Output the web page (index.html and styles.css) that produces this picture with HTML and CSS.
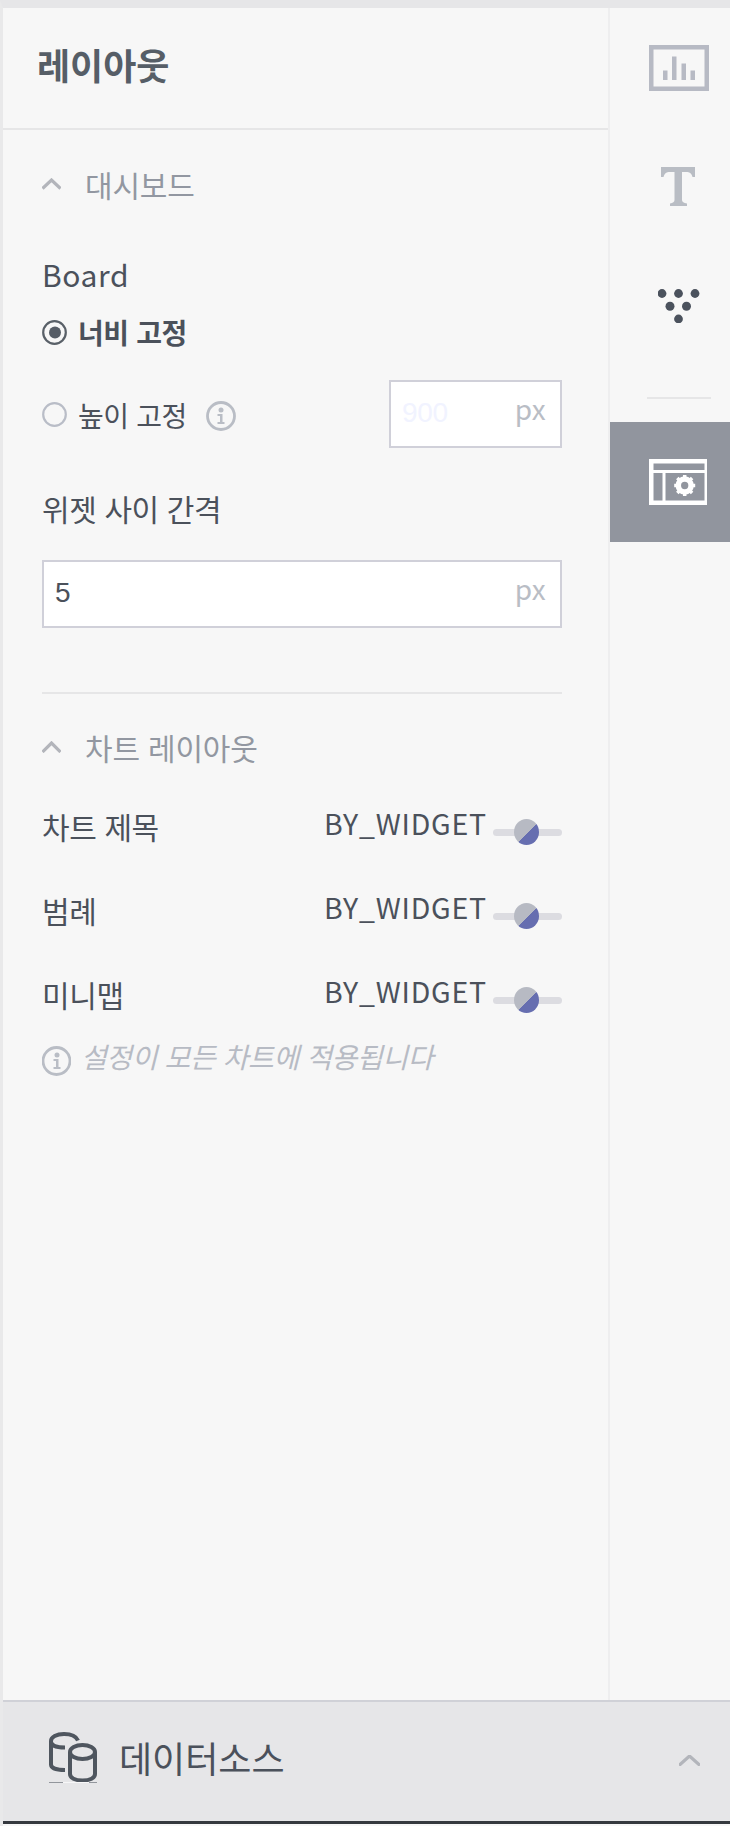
FILE: index.html
```html
<!DOCTYPE html>
<html lang="ko">
<head>
<meta charset="utf-8">
<title>레이아웃</title>
<link rel="stylesheet" href="styles.css">
</head>
<body>
<div class="app">
  <div class="workspace">
    <main class="panel">
      <h1 class="panel-title">레이아웃</h1>
      <section class="section dashboard">
        <h2 class="section-head">
          <svg class="caret" width="19" height="12" viewBox="0 0 19 12"><path d="M0.5 10.5L9.5 2L18.500 10.500"/></svg>
          <span>대시보드</span>
        </h2>
        <div class="board-label">Board</div>
        <div class="option selected">
          <svg class="radio" width="25" height="25" viewBox="0 0 25 25"><circle class="ring" cx="12.500" cy="12.500" r="11.300"/><circle class="dot" cx="13" cy="12.500" r="6"/></svg>
          <span>너비 고정</span>
        </div>
        <div class="option height-option">
          <svg class="radio" width="25" height="25" viewBox="0 0 25 25"><circle class="ring" cx="12.500" cy="12.500" r="11.300"/></svg>
          <span class="option-text">높이 고정</span>
          <svg class="info" width="30" height="30" viewBox="0 0 30 30"><circle class="info-ring" cx="15" cy="15" r="13.500"/><circle cx="15" cy="9" r="2.500"/><path d="M11.500 13h5v8h2v2h-7v-2h2.500v-6h-2.500z"/></svg>
          <div class="field small"><span class="value disabled">900</span><span class="unit">px</span></div>
        </div>
        <div class="gap-label">위젯 사이 간격</div>
        <div class="field"><span class="value">5</span><span class="unit">px</span></div>
      </section>
      <section class="section charts">
        <h2 class="section-head">
          <svg class="caret" width="19" height="12" viewBox="0 0 19 12"><path d="M0.5 11L9.500 2L18.500 11"/></svg>
          <span>차트 레이아웃</span>
        </h2>
        <div class="settings">
          <div class="setting"><span class="name">차트 제목</span><span class="mode">BY_WIDGET</span><span class="slider"><i class="knob"></i></span></div>
          <div class="setting"><span class="name">범례</span><span class="mode">BY_WIDGET</span><span class="slider"><i class="knob"></i></span></div>
          <div class="setting"><span class="name">미니맵</span><span class="mode">BY_WIDGET</span><span class="slider"><i class="knob"></i></span></div>
        </div>
        <p class="note">
          <svg class="info" width="29" height="30" viewBox="0 0 29 30"><circle class="info-ring" cx="14.500" cy="15" r="13.500"/><circle cx="15" cy="9" r="2.500"/><path d="M11.500 13h5v8h2v2h-7v-2h2.500v-6h-2.500z"/></svg>
          <span>설정이 모든 차트에 적용됩니다</span>
        </p>
      </section>
    </main>
    <nav class="rail">
      <a class="tool chart-tool">
        <svg width="60" height="46" viewBox="0 0 60 46"><path fill-rule="evenodd" d="M0 0h60v46H0zM4.500 4.500v37h51v-37z"/><rect x="14" y="25.500" width="4.500" height="9.500"/><rect x="23" y="11.500" width="4.500" height="23.500"/><rect x="32.500" y="18.500" width="4.500" height="16.500"/><rect x="41.500" y="25.500" width="4.500" height="9.500"/></svg>
      </a>
      <a class="tool text-tool">
        <svg width="34" height="39" viewBox="0 0 34 39"><path d="M0 0H34V10H31.500Q30.500 5.500 26.500 5H21V33Q21 35.500 26 36.500V39H9V36.500Q13.500 35.500 13.500 33V5H7.500Q3.500 5.500 2.500 10H0z"/></svg>
      </a>
      <a class="tool filter-tool">
        <svg width="42" height="34" viewBox="0 0 42 34"><circle cx="4" cy="4.500" r="4.400"/><circle cx="20.500" cy="4.500" r="4.400"/><circle cx="37" cy="4.500" r="4.400"/><circle cx="12" cy="17.300" r="4.500"/><circle cx="28.500" cy="17.300" r="4.500"/><circle cx="20.500" cy="30" r="4.400"/></svg>
      </a>
      <div class="rail-divider"></div>
      <a class="tool layout-tool">
        <svg width="58" height="46" viewBox="0 0 58 46"><path fill-rule="evenodd" d="M0 0h58v46H0zM4.500 4.500v6.500h51v-6.500zM4.500 14v27.500h9V14zM16.500 14v27.500h39V14z"/><circle class="gear" cx="35.700" cy="26.500" r="6.400"/><path class="teeth" d="M35.700 16v4M35.700 33v4M25.200 26.500h4M42.200 26.500h4M28.300 19.100l2.500 2.500M40.600 31.400l2.500 2.500M43.100 19.100l-2.500 2.500M30.800 31.400l-2.500 2.500"/></svg>
      </a>
    </nav>
  </div>
  <footer class="datasource">
    <svg class="db" width="48" height="51" viewBox="0 0 48 51">
      <path d="M29 8.500C27 4 21.500 2 15 2C7.500 2 2 5 2 9V32.500C2 36 8 38 16 38M2 9.500C2 13.500 8 15.500 16 15.500"/>
      <ellipse cx="33.500" cy="20" rx="12.500" ry="7"/>
      <path d="M21 20V42C21 46 26 48.500 33.500 48.500S46 46 46 42V20"/>
      <path class="edge" d="M0 50.500H48"/><path class="edge light" d="M14 50.500H40"/>
    </svg>
    <span class="source-name">데이터소스</span>
    <svg class="caret" width="21" height="11" viewBox="0 0 21 11"><path d="M0 10.500L10.500 1L21 10.500"/></svg>
  </footer>
</div>
</body>
</html>
```
FILE: styles.css
```css
* { box-sizing: border-box; }

body {
  margin: 0;
  background: #f7f7f7;
  color: #4b515b;
  font: 30px/40px "Noto Sans CJK KR", "Noto Sans", sans-serif;
}

h1, h2, p { margin: 0; font-weight: 400; }
svg { display: block; flex: none; }

.app {
  display: flex;
  flex-direction: column;
  height: 1826px;
  padding-bottom: 2px;
  border-top: 8px solid #e6e6e8;
  border-left: 3px solid #e9e9ea;
  overflow: hidden;
}

.workspace { display: flex; flex: 1; min-height: 0; }
.panel { width: 605px; }

.panel-title {
  height: 122px;
  padding: 36px 0 0 34px;
  border-bottom: 2px solid #e6e6e7;
  color: #565e67;
  font-size: 36px;
  font-weight: 700;
}

.section { margin: 0 46px 0 39px; letter-spacing: -0.4px; }
.dashboard { padding: 34px 0 64px; border-bottom: 2px solid #e6e6e7; }
.charts { padding-top: 33px; }

.section-head {
  display: flex;
  align-items: center;
  gap: 24px;
  height: 40px;
  color: #9297a1;
  font-size: 30px;
  letter-spacing: -0.2px;
}

.caret { fill: none; stroke: #b3b5bb; stroke-width: 3.2; }
.board-label { height: 40px; margin-top: 50px; letter-spacing: 0.6px; }

.option { display: flex; align-items: center; height: 40px; font-size: 28px; }
.option.selected { margin-top: 18px; font-weight: 700; }
.height-option { height: 68px; margin-top: 28px; }
.option-text { padding-top: 2px; }
.radio { margin-right: 11px; }
.ring { fill: none; stroke: #b9bdc7; stroke-width: 2.2; }
.selected .ring { stroke: #596068; }
.dot { fill: #565d66; }
.info { fill: #b9bdc5; }
.height-option .info { margin: 3px 0 0 19px; }
.info-ring { fill: none; stroke: #b9bdc5; stroke-width: 2.8; }

.gap-label { height: 40px; margin: 40px 0 32px; }

.field {
  display: flex;
  justify-content: space-between;
  height: 68px;
  padding: 6px 14px 0 11px;
  border: 2px solid #d0d0d9;
  background: #fff;
  font-size: 28px;
  letter-spacing: 0;
}
.field.small { width: 173px; margin-left: auto; }
.value { padding-top: 5px; font-family: "Liberation Sans", Arial, sans-serif; letter-spacing: -0.3px; }
.disabled { color: #f1f3ff; }
.unit { color: #b9bdc5; letter-spacing: 0.3px; }

.settings { display: grid; gap: 44px; margin-top: 39px; }
.setting { display: flex; align-items: center; height: 40px; }
.mode { margin: -6px 6px 0 auto; font-size: 28.500px; letter-spacing: 0.8px; }
.slider {
  display: flex;
  align-items: center;
  width: 69px;
  height: 7px;
  margin-top: 12px;
  padding-left: 21px;
  border-radius: 4px;
  background: #dcdce1;
}
.knob {
  width: 25px;
  height: 26px;
  border-radius: 50%;
  background: linear-gradient(135deg, #b7bac3 0 53%, #666eb0 54%);
}

.note {
  display: flex;
  gap: 10px;
  height: 40px;
  margin-top: 22px;
  color: #b7bbc4;
  font-size: 28px;
  font-style: italic;
}
.note .info { margin-top: 10px; }

.rail {
  display: flex;
  flex-direction: column;
  width: 122px;
  border-left: 2px solid #eeeeef;
  fill: #b7bac4;
}
.tool { display: flex; align-items: center; height: 120px; padding-left: 39px; }
.text-tool { padding: 0 0 4px 51px; fill: #b9bdc4; }
.filter-tool { padding: 0 0 4px 48px; fill: #4b525d; }
.rail-divider { width: 64px; height: 2px; margin: 29px 0 23px 37px; background: #e6e6e7; }
.layout-tool { background: #91959e; fill: #fff; }
.gear { fill: none; stroke: #fff; stroke-width: 5.5; }
.teeth { fill: none; stroke: #fff; stroke-width: 3.5; }

.datasource {
  display: flex;
  align-items: center;
  height: 124px;
  padding: 0 30px 2px 46px;
  border-top: 2px solid #d0d1d7;
  border-bottom: 3px solid #35393f;
  background: #e6e6e8;
  font-size: 36px;
}
.db { margin: -7px 22px 0 0; fill: none; stroke: #4f565f; stroke-width: 4; }
.db .edge { stroke: #92969c; stroke-width: 1; }
.db .light { stroke: #f7f7f8; }
.source-name { margin: -7px auto 0 0; }
```
